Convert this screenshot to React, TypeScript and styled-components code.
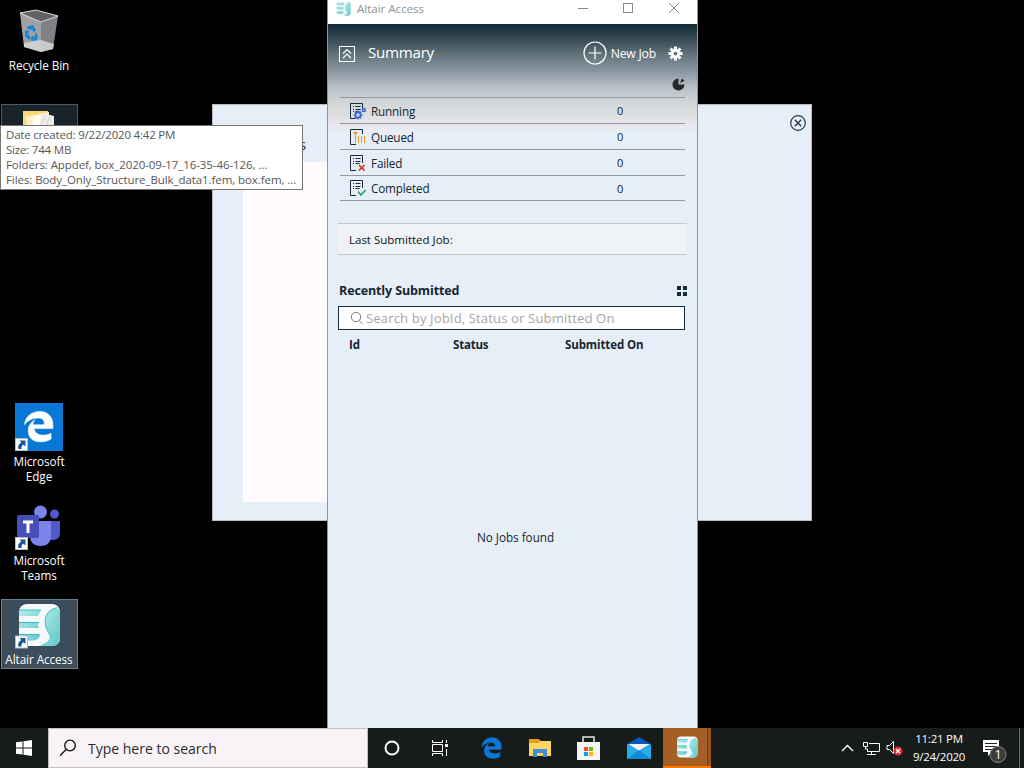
import React from 'react';
import styled, { createGlobalStyle, css } from 'styled-components';

const Global = createGlobalStyle`
  * { box-sizing: border-box; }
  html, body { margin: 0; background: #000; overflow: hidden; }
  body { font-family: "Open Sans", "Noto Sans", sans-serif; font-size: 12px; color: #17252f; }
  svg { display: block; flex: none; }
`;

const Desktop = styled.div`
  position: relative;
  width: 1024px;
  height: 768px;
  background: #000;
  overflow: hidden;
  display: flex;
  flex-direction: column;
  justify-content: flex-end;
`;

const Text = styled.span<{ $size: number; $ls?: number; $weight?: number; $color?: string }>`
  font-size: ${p => p.$size}px;
  letter-spacing: ${p => p.$ls ?? 0}px;
  font-weight: ${p => p.$weight ?? 400};
  color: ${p => p.$color ?? 'inherit'};
  white-space: nowrap;
`;

/* Desktop shortcuts */
const Shortcut = styled.div<{ $top: number; $height?: number; $selected?: 'strong' | 'soft' }>`
  position: absolute;
  left: 1px;
  top: ${p => p.$top}px;
  width: 77px;
  height: ${p => p.$height ?? 90}px;
  padding: 3px 1px 0 0;
  display: flex;
  flex-direction: column;
  align-items: center;
  border: 1px solid transparent;
  ${p => p.$selected === 'strong' && css`background: #3c4d5b; border-color: #6c7f8d;`}
  ${p => p.$selected === 'soft' && css`background: #18242b; border-color: #4b5a64;`}
`;

const ShortcutLabel = styled.div`
  margin-top: 3px;
  color: #fff;
  font-size: 11.7px;
  letter-spacing: -0.06px;
  line-height: 15px;
  text-align: center;
  white-space: nowrap;
`;

const Tooltip = styled.div`
  position: absolute;
  left: 0;
  top: 125px;
  width: 303px;
  height: 65px;
  padding: 1px 0 0 5px;
  background: #fff;
  border: 1px solid #767676;
  color: #575757;
  line-height: 15px;
  display: flex;
  flex-direction: column;
`;

/* Window behind the main one */
const BackWindow = styled.div`
  position: absolute;
  left: 212px;
  top: 104px;
  width: 600px;
  height: 417px;
  background: #e6eff7;
  border: 1px solid #b9bdc2;
  display: flex;
  flex-direction: column;
  padding-left: 30px;
`;

const BackHeader = styled.div`
  height: 57px;
  display: flex;
  justify-content: space-between;
  padding: 10px 5px 0 56px;
`;

const BackTitle = styled.div`
  padding-top: 19px;
  font-size: 15px;
  color: #17384a;
`;

const BackPanel = styled.div`
  width: 540px;
  height: 340px;
  background: linear-gradient(90deg, #fffbff 100px, #e6eff7 100px);
`;

/* Main window */
const MainWindow = styled.div`
  position: absolute;
  left: 327px;
  top: 0;
  width: 371px;
  height: 728px;
  background: #e6eff7;
  border: solid #8d979e;
  border-width: 0 1px;
  display: flex;
  flex-direction: column;
`;

const TitleBar = styled.div`
  height: 24px;
  padding: 0 17px 8px 8px;
  background: #fff;
  display: flex;
  align-items: center;
  gap: 6px;
`;

const WindowButtons = styled.div`
  margin-left: auto;
  display: grid;
  grid-template-columns: 45px 46px 12px;
  align-items: center;
`;

const SummaryPanel = styled.section`
  height: 177px;
  padding: 0 12px;
  background: linear-gradient(180deg, #122b37 0, #344852 14px, #66767e 32px, #909ca6 50px, #b4bec6 62px, #cdd3d5 76px, #dcdfe2 90px, #e7e8ed 101px, #e6eff7 110px);
`;

const SummaryHeader = styled.header`
  height: 59px;
  display: flex;
  align-items: center;
  color: #fff;
  padding: 0 2px 0 0;
`;

const CollapseIcon = styled.svg`
  margin-left: -1px;
`;

const SummaryTitle = styled(Text)`
  padding-bottom: 4px;
  margin-left: 13px;
  flex: 1;
`;

const HeaderAction = styled.div`
  display: flex;
  align-items: center;
  gap: 4px;
  margin-right: 12px;
  padding-bottom: 1px;
`;

const ChartToggle = styled.div`
  height: 14px;
  margin-top: -6px;
  display: flex;
  justify-content: flex-end;
`;

const StatusList = styled.div`
  margin-top: 6px;
  border-top: 1px solid #98989c;
`;

const StatusRow = styled.div<{ $last?: boolean }>`
  height: ${p => (p.$last ? 25 : 26)}px;
  border-bottom: 1px solid #98989c;
  display: grid;
  grid-template-columns: 31px 246px 1fr;
  align-items: center;
  svg { margin-left: 9px; }
`;

const LastJob = styled.div`
  margin: 22px 10px 0;
  height: 32px;
  padding-left: 11px;
  background: #eff2f6;
  border: solid #c5c8cb;
  border-width: 1px 0;
  display: flex;
  align-items: center;
`;

const RecentHeader = styled.div`
  margin: 26px 10px 0 11px;
  height: 20px;
  display: flex;
  align-items: center;
  justify-content: space-between;
`;

const RecentTitle = styled(Text)`
  padding-bottom: 2px;
`;

const SearchField = styled.div`
  margin: 5px 12px 0 10px;
  height: 24px;
  padding-left: 11px;
  gap: 2px;
  background: #fff;
  border: 1px solid #142c3b;
  display: flex;
  align-items: center;
`;

const TableHead = styled.div`
  margin: 5px 12px 0 21px;
  height: 18px;
  display: grid;
  grid-template-columns: 104px 112px 1fr;
  align-items: center;
`;

const Empty = styled.div`
  margin-top: 174px;
  height: 20px;
  padding-left: 6px;
  display: flex;
  justify-content: center;
  align-items: center;
`;

/* Taskbar */
const Taskbar = styled.footer`
  position: relative;
  height: 40px;
  background: #171c1a;
  display: flex;
`;

const StartButton = styled.div`
  width: 48px;
  display: grid;
  place-items: center;
`;

const TaskSearch = styled.div`
  width: 320px;
  padding-left: 11px;
  gap: 12px;
  background: #f7f3f7;
  border: 1px solid #c4bfc4;
  display: flex;
  align-items: center;
`;

const TaskButton = styled.div<{ $width?: number; $active?: boolean }>`
  width: ${p => p.$width ?? 49}px;
  display: grid;
  place-items: center;
  ${p => p.$active && css`
    background: linear-gradient(90deg, #a55e24 44px, #743f18 44px, #743f18 45px, #95531f 45px);
    border-bottom: 2px solid #ff7900;
  `}
`;

const Tray = styled.div`
  margin-left: auto;
  display: flex;
  align-items: center;
`;

const NetworkIcon = styled.svg`
  margin-left: 9px;
`;

const VolumeIcon = styled.svg`
  margin-left: 5px;
`;

const NotificationIcon = styled.svg`
  margin: 4px 0 0 12px;
`;

const Clock = styled.div`
  width: 60px;
  margin-left: 6px;
  display: flex;
  flex-direction: column;
  align-items: center;
  color: #fff;
  line-height: 18px;
`;

const ShowDesktop = styled.div`
  width: 5px;
  height: 40px;
  margin-left: 12px;
  border-left: 1px solid #6b6e6c;
`;

const Arrow = () => (
  <g>
    <rect x="0.5" y="35.500" width="12" height="12" fill="#fff" stroke="#b9bcc0" />
    <path d="M4.500 37.500h6v6l-2-1.800q-2.500 1-2 4.300H3.300q-1-4.500 3-6.500z" fill="#1d5496" />
  </g>
);

const AccessMark = ({ id }: { id: string }) => (
  <g>
    <defs>
      <linearGradient id={id} x1="0" x2="1" y1="0" y2="1">
        <stop offset="0" stopColor="#b8ede7" />
        <stop offset="1" stopColor="#5fc8ce" />
      </linearGradient>
    </defs>
    <rect x="4" y="1" width="41" height="42" rx="8" fill="#f6f8f9" />
    <path d="M4 7h22l-3 6H4z M4 19h20q-2 2 0 6H4z M4 31.500h21q0 4-6 6H6q-2-2-2-6z" fill={`url(#${id})`} />
    <path d="M4 7h22M4 19.500h20M4 31.500h20" stroke="#2fbfc3" strokeWidth="1.200" />
    <path d="M45 8v27q0 8-8 8H24q12-3 12-9-6-7-6-15 1-11 9-14 6 0 6 3z" fill={`url(#${id})`} />
    <path d="M42 4.500q-12 3-12 14 0 7 5.500 14 1 6-8 9.500" fill="none" stroke="#43bfc1" />
  </g>
);

const JobIcon = ({ kind }: { kind: string }) => (
  <svg width="18" height="18" viewBox="0 0 18 18" fill="none">
    <path d={kind === 'queued' ? 'M7 16.500H1.500V1.500h12V6' : 'M7 16.500H1.500V1.500h12V9'} stroke="#142c3b" />
    {kind !== 'queued' && <path d="M4 4.500h1M6.500 4.500h5M4 7.500h1M6.500 7.500h5M4 9.500h1M6.500 9.500h4" stroke="#142c3b" />}
    {kind === 'running' && (
      <g stroke="#3567d0">
        <circle cx="9" cy="13" r="2.600" strokeWidth="1.700" />
        <path d="M9 8.500v2M9 15.500v2M4.500 13h2M11.500 13h2M5.800 9.800l1.300 1.300M10.900 14.900l1.300 1.300M12.200 9.800l-1.300 1.300M7.100 14.900l-1.300 1.300" strokeWidth="1.500" />
        <circle cx="14.800" cy="8" r="1.500" strokeWidth="1.500" />
      </g>
    )}
    {kind === 'queued' && (
      <g stroke="#f59a0c">
        <path d="M4.500 4.500h4L6.500 6.500z" fill="#f59a0c" />
        <path d="M6.500 6v9M9.500 8V15M12.500 8V15M15.500 8V15" />
      </g>
    )}
    {kind === 'failed' && <path d="M10 11l5.500 5.500M15.500 11L10 16.500" stroke="#cf3412" strokeWidth="1.700" />}
    {kind === 'completed' && <path d="M9 12.500l3 3.500L16.700 11" stroke="#18a866" strokeWidth="1.600" />}
  </svg>
);

const edgePath = 'M1 15C2 6 9 1 17 1c9 0 14 6 14 14v4H11c1 5 5 7 10 7 3 0 6-1 8-2v6c-3 2-7 3-11 3C9 33 5 28 5 21c0-5 3-9 7-11-2 2-2 4-2 5h12c0-5-2-7-7-7C9 8 4 11 1 15z';

const statuses = [
  { kind: 'running', label: 'Running' },
  { kind: 'queued', label: 'Queued' },
  { kind: 'failed', label: 'Failed' },
  { kind: 'completed', label: 'Completed' },
];

export default function App() {
  return (
    <>
      <Global />
      <Desktop>
        <Shortcut $top={5}>
          <svg width="48" height="46" viewBox="0 0 48 46">
            <path d="M5 4l16-3 22 6-17 6z" fill="#626265" />
            <path d="M5 4l21 9v30L9 38z" fill="#a0a1a4" />
            <path d="M26 13L43 7l-5 33-12 3z" fill="#808186" />
            <path d="M9 34l17-3 13 4-1 5-12 3-17-5z" fill="#d5d7da" opacity=".85" />
            <path d="M5 4l16-3 22 6-17 6z" fill="none" stroke="#ddd" />
            <g fill="#1686da">
              <path d="M13 17l5-1 3 5-2 2-3-3-2 1-2-2z" />
              <path d="M10 21l4 1-1 3 3 4-2 2-4-4z" />
              <path d="M20 23l3 4-1 4-5 1-1-2 1-3 3 1z" />
            </g>
          </svg>
          <ShortcutLabel>Recycle Bin</ShortcutLabel>
        </Shortcut>
        <Shortcut $top={104} $height={50} $selected="soft">
          <svg width="34" height="40" viewBox="0 0 34 40">
            <path d="M1 3h25v35H1z" fill="#f8d878" />
            <path d="M3 9l24-5v34H11z" fill="#fff1c8" />
            <path d="M11 10l7-3v30h-7z" fill="#fff" />
            <path d="M19 8l5-2 8 2v30H19z" fill="#ececec" />
            <path d="M18 22q1-8 5-13M24 22q0-8 4-13" stroke="#ccc" fill="none" />
          </svg>
        </Shortcut>
        <Shortcut $top={399}>
          <svg width="48" height="48" viewBox="0 0 48 48">
            <rect width="48" height="48" fill="#0878d7" />
            <path d={edgePath} transform="translate(8.500 7.500) scale(.95)" fill="#fff" stroke="#fff" strokeWidth=".6" />
            <Arrow />
          </svg>
          <ShortcutLabel>Microsoft<br />Edge</ShortcutLabel>
        </Shortcut>
        <Shortcut $top={498}>
          <svg width="48" height="48" viewBox="0 0 48 48">
            <circle cx="39.500" cy="12" r="4.500" fill="#5159c7" />
            <path d="M33 19h12v12q0 7-7 7h-5z" fill="#5159c7" />
            <circle cx="25.500" cy="10" r="6.500" fill="#7b83eb" />
            <path d="M15 19h21v14q0 11-10.500 11T15 33z" fill="#7b83eb" />
            <rect x="2" y="13" width="22" height="23" rx="2" fill="#464eb8" />
            <path d="M8 20h10M13 20v11" stroke="#fff" strokeWidth="3" />
            <Arrow />
          </svg>
          <ShortcutLabel>Microsoft<br />Teams</ShortcutLabel>
        </Shortcut>
        <Shortcut $top={599} $height={70} $selected="strong">
          <svg width="48" height="46" viewBox="0 0 48 46">
            <AccessMark id="desk" />
            <g transform="translate(0 -2.500)"><Arrow /></g>
          </svg>
          <ShortcutLabel>Altair Access</ShortcutLabel>
        </Shortcut>

        <BackWindow>
          <BackHeader>
            <BackTitle>s</BackTitle>
            <svg width="16" height="16" viewBox="0 0 16 16" fill="none" stroke="#243946">
              <circle cx="8" cy="8" r="7.300" strokeWidth="1.200" />
              <path d="M4.800 4.800l6.400 6.400M11.200 4.800l-6.400 6.400" strokeWidth="1.400" />
            </svg>
          </BackHeader>
          <BackPanel />
        </BackWindow>

        <MainWindow>
          <TitleBar>
            <svg width="15" height="15" viewBox="2 0 44 44"><AccessMark id="title" /></svg>
            <Text $size={11.6} $ls={-0.05} $color="#929292">Altair Access</Text>
            <WindowButtons>
              <svg width="12" height="12" stroke="#888"><path d="M1 6.500h10" /></svg>
              <svg width="12" height="12" stroke="#888" fill="none"><rect x="1.500" y="1.500" width="9" height="9" /></svg>
              <svg width="12" height="12" stroke="#888"><path d="M1 1l10 10M11 1L1 11" /></svg>
            </WindowButtons>
          </TitleBar>
          <SummaryPanel>
            <SummaryHeader>
              <CollapseIcon width="16" height="16" fill="none" stroke="#fff">
                <rect x="0.500" y="0.500" width="15" height="15" />
                <path d="M4 7.500L8 3.500l4 4M4 12l4-4 4 4" strokeWidth="1.200" />
              </CollapseIcon>
              <SummaryTitle $size={15.2} $ls={-0.3}>Summary</SummaryTitle>
              <HeaderAction>
                <svg width="24" height="24" fill="none" stroke="#fff" strokeWidth="1.200">
                  <circle cx="12" cy="12" r="11" /><path d="M5.500 12h13M12 5.500v13" />
                </svg>
                <Text $size={12.2} $ls={-0.2}>New Job</Text>
              </HeaderAction>
              <svg width="15" height="15" viewBox="0 0 16 16">
                <g stroke="#fff" strokeWidth="3.200"><path d="M8 .5v15M.5 8h15M2.700 2.700l10.600 10.600M13.300 2.700L2.700 13.300" /></g>
                <circle cx="8" cy="8" r="5" fill="#fff" /><circle cx="8" cy="8" r="2" fill="#65757d" />
              </svg>
            </SummaryHeader>
            <ChartToggle>
              <svg width="13" height="14" viewBox="0 0 13 14">
                <path d="M6.500 7.500V1.500A6 6 0 1 0 12.500 7.500z" fill="#26292b" />
                <path d="M8 6l1.800-4.500q2 1 2.500 2.500z" fill="#26292b" />
              </svg>
            </ChartToggle>
            <StatusList>
              {statuses.map((s, i) => (
                <StatusRow key={s.kind} $last={i === 3}>
                  <JobIcon kind={s.kind} />
                  <Text $size={11.7} $ls={-0.15}>{s.label}</Text>
                  <Text $size={11}>0</Text>
                </StatusRow>
              ))}
            </StatusList>
          </SummaryPanel>
          <LastJob><Text $size={11.5} $color="#101010">Last Submitted Job:</Text></LastJob>
          <RecentHeader>
            <RecentTitle $size={12.5} $ls={-0.12} $weight={700}>Recently Submitted</RecentTitle>
            <svg width="10" height="10" fill="#182c3a"><path d="M0 0h4v4H0zM6 0h4v4H6zM0 6h4v4H0zM6 6h4v4H6z" /></svg>
          </RecentHeader>
          <SearchField>
            <svg width="14" height="14" fill="none" stroke="#777"><circle cx="6" cy="6" r="4.700" /><path d="M9 9.500l3.500 3.500" /></svg>
            <Text $size={13.2} $ls={0.08} $color="#a7a7a7">Search by JobId, Status or Submitted On</Text>
          </SearchField>
          <TableHead>
            <Text $size={11.5} $ls={-0.15} $weight={700}>Id</Text>
            <Text $size={11.5} $ls={-0.2} $weight={700}>Status</Text>
            <Text $size={11.5} $ls={-0.1} $weight={700}>Submitted On</Text>
          </TableHead>
          <Empty><Text $size={11.7}>No Jobs found</Text></Empty>
        </MainWindow>

        <Tooltip>
          <Text $size={11.5} $ls={-0.2}>Date created: 9/22/2020 4:42 PM</Text>
          <Text $size={11.5} $ls={-0.2}>Size: 744 MB</Text>
          <Text $size={11.5} $ls={-0.09}>Folders: Appdef, box_2020-09-17_16-35-46-126, ...</Text>
          <Text $size={11.5} $ls={-0.08}>Files: Body_Only_Structure_Bulk_data1.fem, box.fem, ...</Text>
        </Tooltip>

        <Taskbar>
          <StartButton>
            <svg width="16" height="16" fill="#fff"><path d="M0 2.300l6.500-.9v6.100H0zM7.500 1.200L16 0v7.500H7.500zM0 8.500h6.500v6.100L0 13.700zM7.500 8.500H16V16l-8.500-1.200z" /></svg>
          </StartButton>
          <TaskSearch>
            <svg width="16" height="18" fill="none" stroke="#111" strokeWidth="1.300"><circle cx="10" cy="6.500" r="5.300" /><path d="M6.300 10.300L0 16.700" /></svg>
            <Text $size={14} $color="#2d2d2d">Type here to search</Text>
          </TaskSearch>
          <TaskButton $width={48}>
            <svg width="16" height="16" fill="none" stroke="#fff" strokeWidth="2"><circle cx="8" cy="8" r="6.500" /></svg>
          </TaskButton>
          <TaskButton $width={48}>
            <svg width="17" height="16" fill="none" stroke="#fff"><path d="M.5 0v2.500h10V0M.5 16v-2.500h10V16M.5 4.500h10v7H.5zM14.500 0v3M14.500 9v7" /><rect x="13" y="4" width="3" height="3" fill="#fff" stroke="none" /></svg>
          </TaskButton>
          <TaskButton $width={54}>
            <svg width="21" height="22" viewBox="0 0 32 34"><path d={edgePath} fill="#0b79d9" stroke="#0b79d9" /></svg>
          </TaskButton>
          <TaskButton $width={44}>
            <svg width="22" height="20">
              <path d="M0 1h9l3 2h10v15H0z" fill="#fbd565" /><path d="M0 1h9l3 2-2 2H0z" fill="#e4a01b" />
              <path d="M4 19v-7q0-1 1-1h12q1 0 1 1v7h-4v-4H8v4z" fill="#3d90d5" />
            </svg>
          </TaskButton>
          <TaskButton $width={52}>
            <svg width="23" height="24">
              <path d="M6 7V1h11v6" fill="none" stroke="#e8e8e8" strokeWidth="1.500" /><path d="M0 6h23v18H0z" fill="#f5f5f5" />
              <path d="M7 11h4v4H7z" fill="#f25022" /><path d="M12 11h4v4h-4z" fill="#7fba00" /><path d="M7 16h4v4H7z" fill="#00a4ef" /><path d="M12 16h4v4h-4z" fill="#ffb900" />
            </svg>
          </TaskButton>
          <TaskButton $width={49}>
            <svg width="24" height="24">
              <path d="M0 8l12-7 12 7v15H0z" fill="#075bb5" /><path d="M1 8h22L12 15z" fill="#f1f2f4" /><path d="M0 8l12 7 12-7v15H0z" fill="#26aeea" /><path d="M0 23L12 14 24 23z" fill="#128bd9" />
            </svg>
          </TaskButton>
          <TaskButton $width={48} $active>
            <svg width="22" height="22" viewBox="2 0 44 44"><AccessMark id="task" /></svg>
          </TaskButton>
          <Tray>
            <svg width="13" height="8" fill="none" stroke="#fff" strokeWidth="1.400"><path d="M1 7l5.500-5.500L12 7" /></svg>
            <NetworkIcon width="18" height="16" fill="none" stroke="#fff"><path d="M6 3.500h10.500v8h-12V9M4 14.500h9M8.500 12v2.500M.5 2.500h4v4h-4zM2.500 6.500V9h2" /></NetworkIcon>
            <VolumeIcon width="17" height="16">
              <path d="M1 5.500h2.500l4-4v12l-4-4H1z" fill="none" stroke="#fff" />
              <circle cx="12" cy="11" r="4.500" fill="#e1252c" /><path d="M10 9l4 4M14 9l-4 4" stroke="#fff" strokeWidth="1.300" />
            </VolumeIcon>
            <Clock><Text $size={11.5} $ls={-0.25}>11:21 PM</Text><Text $size={11.5} $ls={-0.25}>9/24/2020</Text></Clock>
            <NotificationIcon width="26" height="26">
              <path d="M2 3h16v12h-7l-4 4v-4H2z" fill="#fff" /><path d="M4 6.500h12M4 9.500h12M4 12.500h7" stroke="#222" />
              <circle cx="17" cy="17.500" r="8" fill="#3a3d3c" stroke="#858786" />
              <text x="17" y="22" textAnchor="middle" fill="#fff" fontSize="12.500">1</text>
            </NotificationIcon>
            <ShowDesktop />
          </Tray>
        </Taskbar>
      </Desktop>
    </>
  );
}
